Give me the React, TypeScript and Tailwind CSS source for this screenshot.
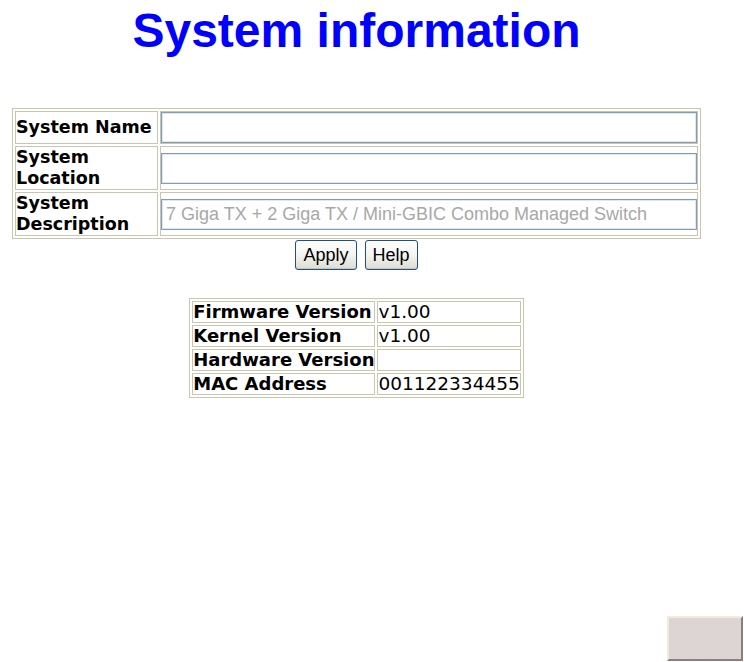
import React from "react"

const labelFont = { fontFamily: '"DejaVu Sans", Verdana, sans-serif' }
const arial = { fontFamily: '"Liberation Sans", Arial, sans-serif' }

function FieldRow({ label, value, twoLine }: { label: React.ReactNode; value?: string; twoLine?: boolean }) {
  return (
    <tr>
      <td
        className={`w-[143px] border border-[#c9c6ad] bg-white p-0 align-middle ${twoLine ? "h-[44px]" : "h-[33px]"}`}
        style={labelFont}
      >
        <div className="text-[17.5px] font-bold leading-[21px] text-black whitespace-nowrap">{label}</div>
      </td>
      <td className="border border-[#c9c6ad] bg-white p-0 align-middle">
        <input
          readOnly
          defaultValue={value ?? ""}
          className="block h-[31px] w-full border border-[#7f9db9] bg-white px-[4px] text-[18px] text-[#a8a8a8] outline-none shadow-[inset_0_0_0_1px_#dfe7ef]"
          style={arial}
        />
      </td>
    </tr>
  )
}

function InfoRow({ label, value }: { label: string; value: string }) {
  return (
    <tr>
      <td className="h-[22px] w-[181px] border border-[#c9c6ad] bg-white p-0 text-[18px] font-bold leading-[20px] text-black whitespace-nowrap">
        {label}
      </td>
      <td className="h-[22px] w-[145px] border border-[#c9c6ad] bg-white p-0 text-[18.5px] leading-[20px] text-black whitespace-nowrap">
        {value}
      </td>
    </tr>
  )
}

function XpButton({ children }: { children: React.ReactNode }) {
  return (
    <button
      className="h-[30px] rounded-[3px] border border-[#1c4f8c] bg-gradient-to-b from-white via-[#f4f4f0] to-[#dcdcd2] px-[7px] text-[18px] text-black shadow-[inset_0_-1px_0_#c9c6b8]"
      style={arial}
    >
      {children}
    </button>
  )
}

export default function App() {
  return (
    <div className="relative flex h-[662px] w-[744px] flex-col overflow-hidden bg-white">
      <div className="flex w-[713px] flex-col items-center">
        <h1 className="pt-[7px] text-[48px] font-bold leading-[48px] text-[#0000ff]" style={arial}>
          System information
        </h1>

        <table className="mt-[53px] w-[689px] border-separate border-spacing-[2px] border border-[#c9c6ad]">
          <tbody>
            <FieldRow label="System Name" />
            <FieldRow
              twoLine
              label={
                <>
                  System
                  <br />
                  Location
                </>
              }
            />
            <FieldRow
              twoLine
              label={
                <>
                  System
                  <br />
                  Description
                </>
              }
              value="7 Giga TX + 2 Giga TX / Mini-GBIC Combo Managed Switch"
            />
          </tbody>
        </table>

        <div className="mt-[1px] flex gap-[8px]">
          <XpButton>Apply</XpButton>
          <XpButton>Help</XpButton>
        </div>

        <table
          className="mt-[28px] w-[333px] border-separate border-spacing-[2px] border border-[#c9c6ad]"
          style={labelFont}
        >
          <tbody>
            <InfoRow label="Firmware Version" value="v1.00" />
            <InfoRow label="Kernel Version" value="v1.00" />
            <InfoRow label="Hardware Version" value="" />
            <InfoRow label="MAC Address" value="001122334455" />
          </tbody>
        </table>
      </div>

      <div className="mt-auto mb-[1px] mr-[1px] h-[45px] w-[76px] self-end border-2 border-t-[#f3ebdc] border-l-[#f3ebdc] border-r-[#8c7f7b] border-b-[#8c7f7b] bg-[#ddd5d4]" />
    </div>
  )
}
